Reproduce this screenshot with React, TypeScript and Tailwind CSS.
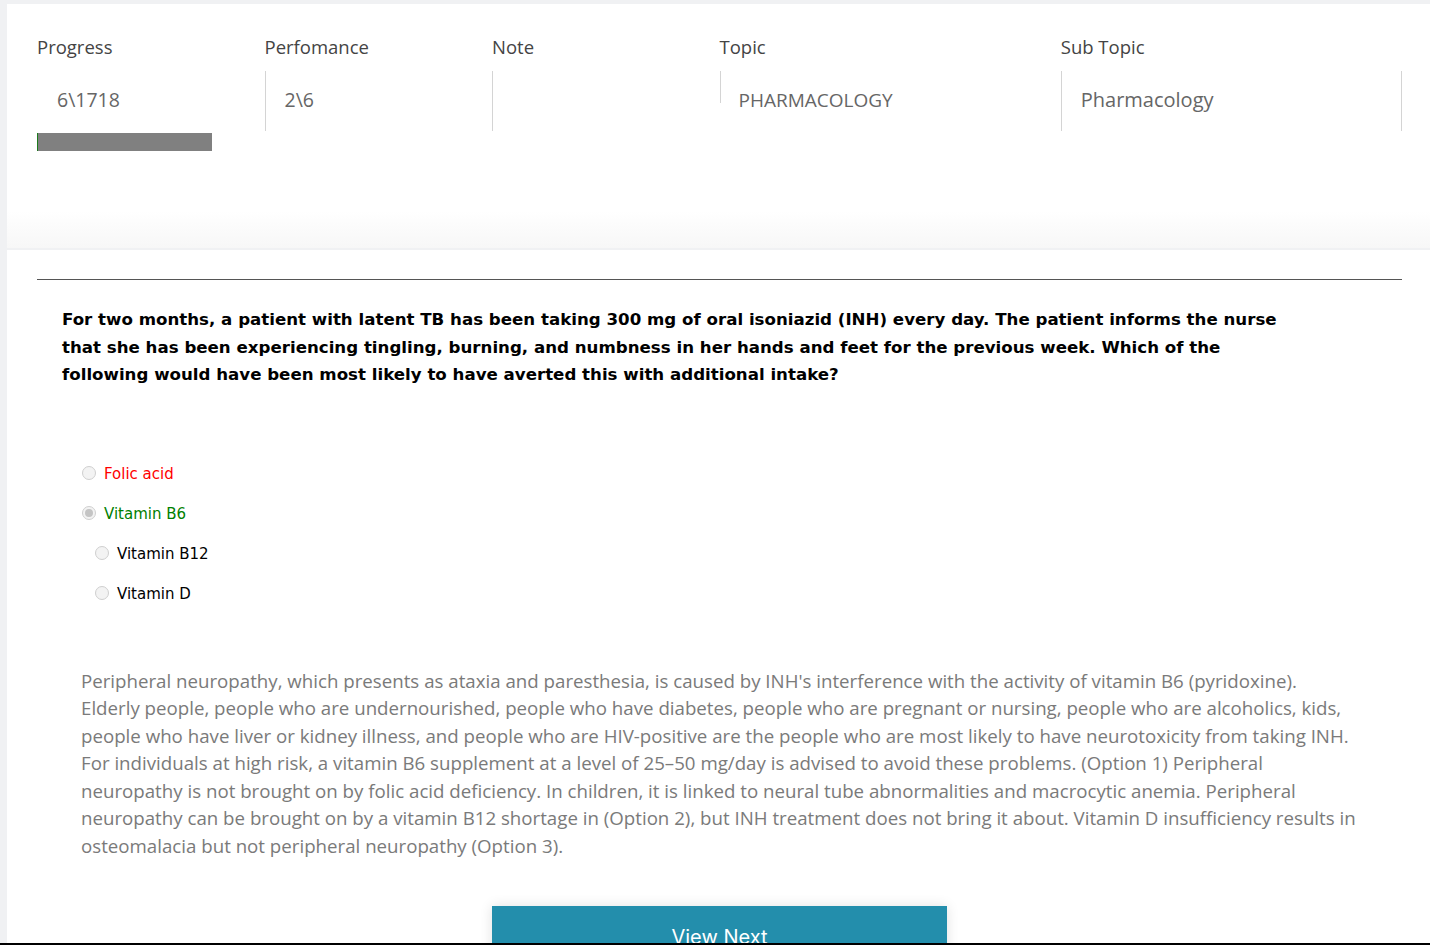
import React from "react";

const poppins = "font-['Open_Sans',sans-serif]";
const verdana = "font-['DejaVu_Sans',Verdana,sans-serif]";

type Option = { label: string; tone: "wrong" | "right" | "plain"; indent?: boolean; checked?: boolean };

const options: Option[] = [
  { label: "Folic acid", tone: "wrong" },
  { label: "Vitamin B6", tone: "right", checked: true },
  { label: "Vitamin B12", tone: "plain", indent: true },
  { label: "Vitamin D", tone: "plain", indent: true },
];

function Radio({ checked }: { checked?: boolean }) {
  return (
    <span className="flex h-[14px] w-[14px] shrink-0 items-center justify-center rounded-full border border-[#cfcfcf] bg-[#f3f3f3]">
      {checked && <span className="h-[8px] w-[8px] rounded-full bg-[#c4c4c4]" />}
    </span>
  );
}

function StatHeader({ children }: { children: React.ReactNode }) {
  return <div className={`${poppins} text-[18.5px] leading-[24px] text-[#444]`}>{children}</div>;
}

export default function App() {
  return (
    <div className="relative h-[945px] overflow-hidden border-b-2 border-black bg-[#f0f1f3]">
      {/* stats card */}
      <div className="ml-[7px] mt-[4px] h-[244px] bg-gradient-to-b from-white from-85% to-[#f7f7f7] pl-[30px] pt-[31px]">
        <div className="grid w-[1365px] grid-cols-12">
          <div className="col-span-2">
            <StatHeader>Progress</StatHeader>
            <div className={`${poppins} mt-[12px] flex h-[60px] items-center pb-[2px] pl-[20px] text-[19.5px] text-[#666]`}>6\1718</div>
            <div className="mt-[2px] h-[18px] w-[175px] border-l border-[#1d7a1d] bg-[#808080]" />
          </div>
          <div className="col-span-2">
            <StatHeader>Perfomance</StatHeader>
            <div className={`${poppins} mt-[12px] flex h-[60px] items-center border-l border-[#d4d4d4] pb-[2px] pl-[19px] text-[19.5px] text-[#666]`}>2\6</div>
          </div>
          <div className="col-span-2">
            <StatHeader>Note</StatHeader>
            <div className="mt-[12px] h-[60px] border-l border-[#d4d4d4]" />
          </div>
          <div className="col-span-3">
            <StatHeader>Topic</StatHeader>
            <div className="mt-[12px] flex h-[60px] items-start">
              <div className="h-[32px] w-px bg-[#d4d4d4]" />
              <div className={`${poppins} self-center pb-[2px] pl-[18px] text-[19px] text-[#666]`}>PHARMACOLOGY</div>
            </div>
          </div>
          <div className="col-span-3">
            <StatHeader>Sub Topic</StatHeader>
            <div className={`${poppins} mt-[12px] flex h-[60px] items-center border-x border-[#d4d4d4] pb-[2px] pl-[19px] text-[20px] text-[#666]`}>Pharmacology</div>
          </div>
        </div>
      </div>

      {/* question card */}
      <div className="ml-[7px] mt-[2px] bg-white pl-[30px] pt-[29px] pb-[40px]">
        <div className="w-[1365px] border-t border-[#555]" />

        <p className={`${verdana} ml-[25px] mt-[26px] w-[1232px] text-[16.65px] font-bold leading-[27.5px] text-black`}>
          For two months, a patient with latent TB has been taking 300 mg of oral isoniazid (INH) every day. The patient informs the nurse that she has been experiencing tingling, burning, and numbness in her hands and feet for the previous week. Which of the following would have been most likely to have averted this with additional intake?
        </p>

        <div className="ml-[45px] mt-[76px] flex flex-col gap-[20px]">
          {options.map((o) => (
            <label
              key={o.label}
              className={`flex h-[20px] items-center gap-[8px] ${o.indent ? "pl-[13px]" : ""}`}
            >
              <span className="-mt-[4px]">
                <Radio checked={o.checked} />
              </span>
              <span
                className={`${verdana} text-[15px] ${
                  o.tone === "wrong" ? "text-[#ff0000]" : o.tone === "right" ? "text-[#008000]" : "text-black"
                }`}
              >
                {o.label}
              </span>
            </label>
          ))}
        </div>

        <p className={`${poppins} ml-[44px] mt-[62px] w-[1276px] text-[18.7px] leading-[27.5px] text-[#7a7a7a]`}>
          Peripheral neuropathy, which presents as ataxia and paresthesia, is caused by INH's interference with the activity of vitamin B6 (pyridoxine). Elderly people, people who are undernourished, people who have diabetes, people who are pregnant or nursing, people who are alcoholics, kids, people who have liver or kidney illness, and people who are HIV-positive are the people who are most likely to have neurotoxicity from taking INH. For individuals at high risk, a vitamin B6 supplement at a level of 25–50 mg/day is advised to avoid these problems. (Option 1) Peripheral neuropathy is not brought on by folic acid deficiency. In children, it is linked to neural tube abnormalities and macrocytic anemia. Peripheral neuropathy can be brought on by a vitamin B12 shortage in (Option 2), but INH treatment does not bring it about. Vitamin D insufficiency results in osteomalacia but not peripheral neuropathy (Option 3).
        </p>

        <div className="ml-[455px] mt-[47px]">
          <button className="h-[60px] w-[455px] bg-[#238eac] pt-[2px] font-['Inter',sans-serif] text-[20px] text-white shadow-[0_0_12px_rgba(0,0,0,0.12)]">
            View Next
          </button>
        </div>
      </div>
    </div>
  );
}
